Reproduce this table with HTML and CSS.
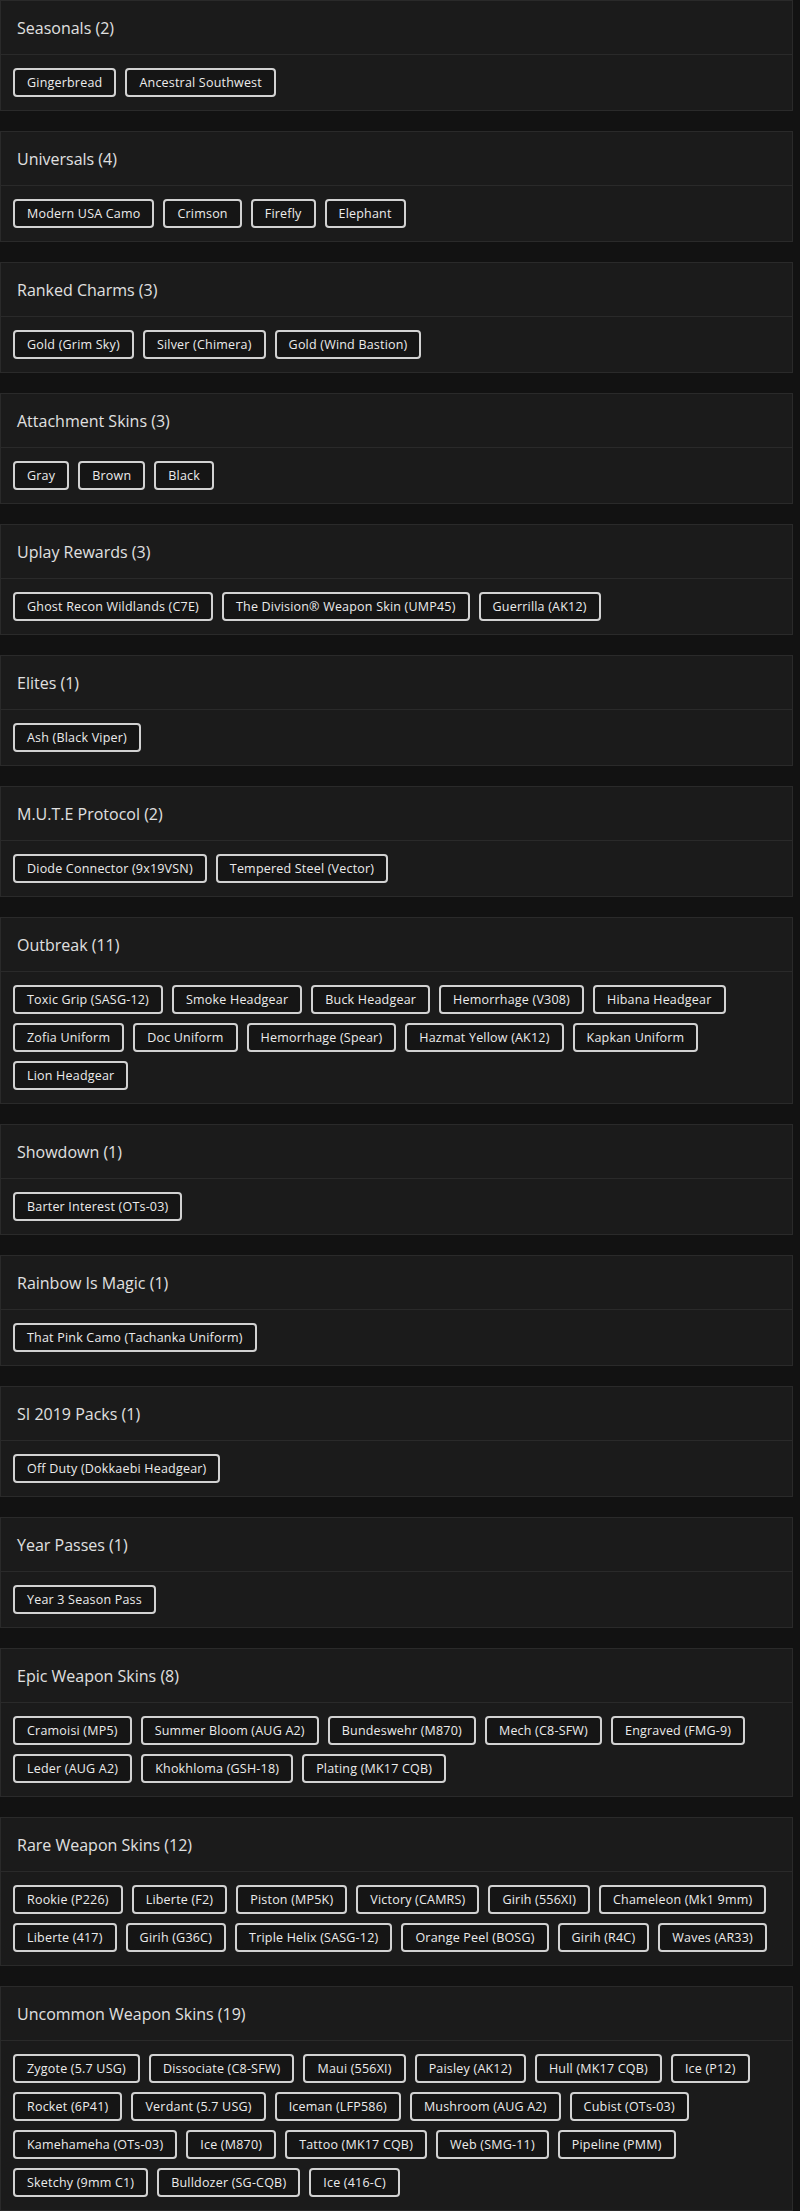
FILE: index.html
```html
<!DOCTYPE html>
<html lang="en">

<head>
    <meta charset="UTF-8">
    <meta name="viewport" content="width=device-width, initial-scale=1.0">
    <title>Skins</title>
    <link rel="stylesheet" href="styles.css">
</head>

<body>
    <div class="list">
        <div class="card">
            <div class="card-header">Seasonals (2)</div>
            <div class="card-body">
                <span class="tag">Gingerbread</span>
                <span class="tag">Ancestral Southwest</span>
            </div>
        </div>

        <div class="card">
            <div class="card-header">Universals (4)</div>
            <div class="card-body">
                <span class="tag">Modern USA Camo</span>
                <span class="tag">Crimson</span>
                <span class="tag">Firefly</span>
                <span class="tag">Elephant</span>
            </div>
        </div>

        <div class="card">
            <div class="card-header">Ranked Charms (3)</div>
            <div class="card-body">
                <span class="tag">Gold (Grim Sky)</span>
                <span class="tag">Silver (Chimera)</span>
                <span class="tag">Gold (Wind Bastion)</span>
            </div>
        </div>

        <div class="card">
            <div class="card-header">Attachment Skins (3)</div>
            <div class="card-body">
                <span class="tag">Gray</span>
                <span class="tag">Brown</span>
                <span class="tag">Black</span>
            </div>
        </div>

        <div class="card">
            <div class="card-header">Uplay Rewards (3)</div>
            <div class="card-body">
                <span class="tag">Ghost Recon Wildlands (C7E)</span>
                <span class="tag">The Division® Weapon Skin (UMP45)</span>
                <span class="tag">Guerrilla (AK12)</span>
            </div>
        </div>

        <div class="card">
            <div class="card-header">Elites (1)</div>
            <div class="card-body">
                <span class="tag">Ash (Black Viper)</span>
            </div>
        </div>

        <div class="card">
            <div class="card-header">M.U.T.E Protocol (2)</div>
            <div class="card-body">
                <span class="tag">Diode Connector (9x19VSN)</span>
                <span class="tag">Tempered Steel (Vector)</span>
            </div>
        </div>

        <div class="card">
            <div class="card-header">Outbreak (11)</div>
            <div class="card-body">
                <span class="tag">Toxic Grip (SASG-12)</span>
                <span class="tag">Smoke Headgear</span>
                <span class="tag">Buck Headgear</span>
                <span class="tag">Hemorrhage (V308)</span>
                <span class="tag">Hibana Headgear</span>
                <span class="tag">Zofia Uniform</span>
                <span class="tag">Doc Uniform</span>
                <span class="tag">Hemorrhage (Spear)</span>
                <span class="tag">Hazmat Yellow (AK12)</span>
                <span class="tag">Kapkan Uniform</span>
                <span class="tag">Lion Headgear</span>
            </div>
        </div>

        <div class="card">
            <div class="card-header">Showdown (1)</div>
            <div class="card-body">
                <span class="tag">Barter Interest (OTs-03)</span>
            </div>
        </div>

        <div class="card">
            <div class="card-header">Rainbow Is Magic (1)</div>
            <div class="card-body">
                <span class="tag">That Pink Camo (Tachanka Uniform)</span>
            </div>
        </div>

        <div class="card">
            <div class="card-header">SI 2019 Packs (1)</div>
            <div class="card-body">
                <span class="tag">Off Duty (Dokkaebi Headgear)</span>
            </div>
        </div>

        <div class="card">
            <div class="card-header">Year Passes (1)</div>
            <div class="card-body">
                <span class="tag">Year 3 Season Pass</span>
            </div>
        </div>

        <div class="card">
            <div class="card-header">Epic Weapon Skins (8)</div>
            <div class="card-body">
                <span class="tag">Cramoisi (MP5)</span>
                <span class="tag">Summer Bloom (AUG A2)</span>
                <span class="tag">Bundeswehr (M870)</span>
                <span class="tag">Mech (C8-SFW)</span>
                <span class="tag">Engraved (FMG-9)</span>
                <span class="tag">Leder (AUG A2)</span>
                <span class="tag">Khokhloma (GSH-18)</span>
                <span class="tag">Plating (MK17 CQB)</span>
            </div>
        </div>

        <div class="card">
            <div class="card-header">Rare Weapon Skins (12)</div>
            <div class="card-body">
                <span class="tag">Rookie (P226)</span>
                <span class="tag">Liberte (F2)</span>
                <span class="tag">Piston (MP5K)</span>
                <span class="tag">Victory (CAMRS)</span>
                <span class="tag">Girih (556XI)</span>
                <span class="tag">Chameleon (Mk1 9mm)</span>
                <span class="tag">Liberte (417)</span>
                <span class="tag">Girih (G36C)</span>
                <span class="tag">Triple Helix (SASG-12)</span>
                <span class="tag">Orange Peel (BOSG)</span>
                <span class="tag">Girih (R4C)</span>
                <span class="tag">Waves (AR33)</span>
            </div>
        </div>

        <div class="card">
            <div class="card-header">Uncommon Weapon Skins (19)</div>
            <div class="card-body">
                <span class="tag">Zygote (5.7 USG)</span>
                <span class="tag">Dissociate (C8-SFW)</span>
                <span class="tag">Maui (556XI)</span>
                <span class="tag">Paisley (AK12)</span>
                <span class="tag">Hull (MK17 CQB)</span>
                <span class="tag">Ice (P12)</span>
                <span class="tag">Rocket (6P41)</span>
                <span class="tag">Verdant (5.7 USG)</span>
                <span class="tag">Iceman (LFP586)</span>
                <span class="tag">Mushroom (AUG A2)</span>
                <span class="tag">Cubist (OTs-03)</span>
                <span class="tag">Kamehameha (OTs-03)</span>
                <span class="tag">Ice (M870)</span>
                <span class="tag">Tattoo (MK17 CQB)</span>
                <span class="tag">Web (SMG-11)</span>
                <span class="tag">Pipeline (PMM)</span>
                <span class="tag">Sketchy (9mm C1)</span>
                <span class="tag">Bulldozer (SG-CQB)</span>
                <span class="tag">Ice (416-C)</span>
            </div>
        </div>
    </div>
</body>

</html>
```

FILE: styles.css
```css
body {
    margin: 0;
    background: #121212;
    font-family: "Open Sans", "Noto Sans", sans-serif;
    color: #e0e0e0;
}

.list {
    display: flex;
    flex-direction: column;
    gap: 20px;
    padding-right: 7px;
}

.card {
    background: #1b1b1b;
    border: 1px solid #2a2a2a;
}

.card-header {
    height: 53px;
    display: flex;
    align-items: center;
    padding: 0 16px;
    border-bottom: 1px solid #2a2a2a;
    font-size: 16px;
    font-weight: 500;
}

.card-body {
    display: flex;
    flex-wrap: wrap;
    gap: 9px;
    padding: 13px 12px;
}

.tag {
    display: inline-block;
    padding: 4px 12px;
    line-height: 17px;
    font-size: 12.5px;
    letter-spacing: 0.2px;
    color: #ececec;
    background: #151515;
    border: 2px solid #d2d2d2;
    border-radius: 4px;
}
```
